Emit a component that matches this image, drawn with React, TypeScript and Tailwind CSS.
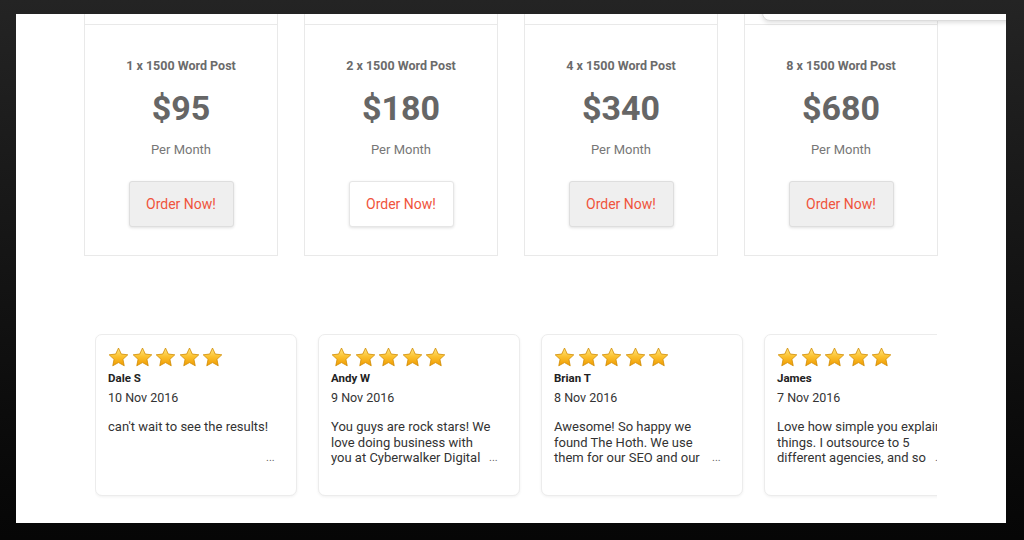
const PLANS = [
  { title: '1 x 1500 Word Post', price: '$95', white: false },
  { title: '2 x 1500 Word Post', price: '$180', white: true },
  { title: '4 x 1500 Word Post', price: '$340', white: false },
  { title: '8 x 1500 Word Post', price: '$680', white: false },
]

const REVIEWS = [
  { name: 'Dale S', date: '10 Nov 2016', lines: ["can't wait to see the results!"] },
  {
    name: 'Andy W',
    date: '9 Nov 2016',
    lines: ['You guys are rock stars! We', 'love doing business with', 'you at Cyberwalker Digital'],
  },
  {
    name: 'Brian T',
    date: '8 Nov 2016',
    lines: ['Awesome! So happy we', 'found The Hoth. We use', 'them for our SEO and our'],
  },
  {
    name: 'James',
    date: '7 Nov 2016',
    lines: ['Love how simple you explain', 'things. I outsource to 5', 'different agencies, and so'],
  },
]

function Star({ id }: { id: string }) {
  return (
    <svg width="21" height="20" viewBox="0 0 24 23">
      <defs>
        <linearGradient id={id} x1="0" y1="0" x2="0" y2="1">
          <stop offset="0" stopColor="#ffe680" />
          <stop offset="0.5" stopColor="#fbc02d" />
          <stop offset="1" stopColor="#ef9a00" />
        </linearGradient>
      </defs>
      <path
        d="M12 1.2l3.2 6.9 7.5.9-5.6 5.2 1.5 7.4L12 17.9l-6.6 3.7 1.5-7.4L1.3 9l7.5-.9z"
        fill={`url(#${id})`}
        stroke="#d08a00"
        strokeWidth="0.9"
        strokeLinejoin="round"
      />
    </svg>
  )
}

function PlanCard({ plan }: { plan: (typeof PLANS)[number] }) {
  return (
    <div className="w-[194px] shrink-0 border border-[#e9e9e9] bg-white">
      <div className="h-[30px] border-b border-[#e9e9e9]" />
      <div className="h-[230px] flex flex-col items-center pt-[33px]">
        <div className="text-[12.5px] font-bold text-[#6b6b6b] leading-4">{plan.title}</div>
        <div className="mt-[14px] text-[34px] font-bold text-[#666] leading-[40px]">{plan.price}</div>
        <div className="mt-[14px] text-[13px] text-[#777] leading-4">Per Month</div>
        <button
          type="button"
          className={`mt-[23px] w-[105px] h-[46px] rounded-[3px] border text-[14px] text-[#f0543c] shadow-[0_1px_3px_rgba(0,0,0,0.12)] ${
            plan.white ? 'bg-white border-[#e6e6e6]' : 'bg-[#efefef] border-[#dedede]'
          }`}
        >
          Order Now!
        </button>
      </div>
    </div>
  )
}

function ReviewCard({ r, i }: { r: (typeof REVIEWS)[number]; i: number }) {
  return (
    <div className="relative w-[202px] h-[162px] shrink-0 rounded-[7px] border border-[#ececec] bg-white shadow-[0_1px_3px_rgba(0,0,0,0.06)] px-[12px] pt-[12px] text-[#222]">
      <div className="flex gap-[2.5px]">
        {[0, 1, 2, 3, 4].map((s) => (
          <Star key={s} id={`g${i}${s}`} />
        ))}
      </div>
      <div className="mt-[3px] text-[11.5px] font-bold leading-4">{r.name}</div>
      <div className="mt-[4px] text-[12.5px] leading-4 text-[#333]">{r.date}</div>
      <div className="mt-[13px] text-[13px] leading-[15.5px] text-[#333]">
        {r.lines.map((l) => (
          <div key={l} className="whitespace-nowrap">
            {l}
          </div>
        ))}
      </div>
      <div className="absolute left-[170px] top-[115px] text-[11px] text-[#666]">...</div>
    </div>
  )
}

export default function App() {
  return (
    <div
      className="w-[1024px] h-[540px] overflow-hidden bg-gradient-to-b from-[#242424] to-[#060606] pt-[14px] pl-[16px]"
      style={{ fontFamily: 'Roboto, "Liberation Sans", sans-serif' }}
    >
      <div className="relative w-[990px] h-[509px] bg-white overflow-hidden">
        <div className="absolute left-[746px] top-[-10px] w-[300px] h-[17px] rounded-bl-[8px] border border-[#dcdcdc] bg-white shadow-[0_2px_4px_rgba(0,0,0,0.12)]" />

        <div className="flex gap-[26px] ml-[68px] -mt-[20px]">
          {PLANS.map((p) => (
            <PlanCard key={p.title} plan={p} />
          ))}
        </div>

        <div className="ml-[79px] mt-[78px] w-[842px] overflow-hidden pb-[4px]">
          <div className="flex gap-[21px]">
            {REVIEWS.map((r, i) => (
              <ReviewCard key={r.name} r={r} i={i} />
            ))}
          </div>
        </div>
      </div>
    </div>
  )
}
